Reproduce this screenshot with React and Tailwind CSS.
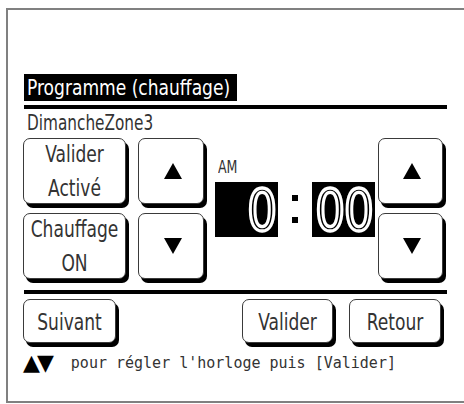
import React from "react";

const cond = "font-['DejaVu_Sans_Condensed','DejaVu_Sans',sans-serif] [font-stretch:condensed]";

function Btn({ className = "", children }) {
  return (
    <div
      className={`flex items-center justify-center bg-white border-[1.5px] border-[#3a3a3a] rounded-[7px] shadow-[3px_4px_0_0_#000] text-[#333] ${className}`}
    >
      {children}
    </div>
  );
}

function Label({ children }) {
  return (
    <span className={`inline-block scale-y-125 text-[19px] leading-[27px] text-center ${cond}`}>
      {children}
    </span>
  );
}

function Arrow({ up }) {
  return (
    <svg width="20" height="18" viewBox="0 0 20 18" className="ml-[3px]">
      {up ? (
        <polygon points="10,1 19,17 1,17" fill="#000" />
      ) : (
        <polygon points="1,1 19,1 10,17" fill="#000" />
      )}
    </svg>
  );
}

const digit = `inline-block scale-y-110 text-[52px] leading-none text-black [-webkit-text-stroke:3px_#fff] ${cond}`;

export default function App() {
  return (
    <div className="w-[464px] h-[404px] bg-white overflow-hidden">
      <div className="ml-[6px] mt-[8px] w-[470px] h-[395px] border-t-2 border-l-2 border-b-2 border-[#808080]">
        <div className="ml-[15px] mt-[64px] w-[424px] flex flex-col">
          {/* Title */}
          <div className="ml-[1px] w-[213px] h-[27px] bg-black text-white pl-[3px] flex items-center">
            <span className={`inline-block scale-y-110 text-[19px] leading-none ${cond}`}>
              Programme (chauffage)
            </span>
          </div>
          <div className="ml-[1px] mt-[4px] h-[4px] bg-black" />

          <div className="h-[29px] flex items-center pl-[4px]">
            <span className={`inline-block scale-y-125 text-[17px] leading-none text-[#333] ${cond}`}>
              DimancheZone3
            </span>
          </div>

          {/* Main controls */}
          <div className="flex">
            <div className="flex flex-col gap-[9px]">
              <Btn className="w-[103px] h-[66px]">
                <Label>
                  Valider
                  <br />
                  Activé
                </Label>
              </Btn>
              <Btn className="w-[103px] h-[66px]">
                <Label>
                  Chauffage
                  <br />
                  ON
                </Label>
              </Btn>
            </div>
            <div className="ml-[12px] flex flex-col gap-[9px]">
              <Btn className="w-[66px] h-[66px]">
                <Arrow up />
              </Btn>
              <Btn className="w-[66px] h-[66px]">
                <Arrow />
              </Btn>
            </div>

            <div className="w-[174px] flex flex-col pl-[11px]">
              <div className="h-[44px] pl-[3px] pt-[20px]">
                <span className={`block w-fit origin-top scale-y-125 text-[14px] leading-[14px] text-[#333] ${cond}`}>
                  AM
                </span>
              </div>
              <div className="flex items-center">
                <div className="w-[63px] h-[55px] bg-black flex items-center justify-end pt-[3px] pr-[1px]">
                  <span className={digit}>0</span>
                </div>
                <div className="w-[34px] h-[55px] flex flex-col items-center pt-[13px] gap-[16px]">
                  <div className="w-[6px] h-[6px] bg-black" />
                  <div className="w-[6px] h-[6px] bg-black" />
                </div>
                <div className="w-[63px] h-[55px] bg-black flex items-center justify-center pt-[3px] pl-[1px]">
                  <span className={`${digit} tracking-[-1px]`}>00</span>
                </div>
              </div>
            </div>

            <div className="flex flex-col gap-[9px]">
              <Btn className="w-[65px] h-[66px]">
                <Arrow up />
              </Btn>
              <Btn className="w-[65px] h-[66px]">
                <Arrow />
              </Btn>
            </div>
          </div>

          <div className="ml-[1px] mt-[11px] h-[4px] bg-black" />

          {/* Bottom buttons */}
          <div className="mt-[5px] flex">
            <Btn className="w-[93px] h-[44px]">
              <Label>Suivant</Label>
            </Btn>
            <Btn className="ml-auto w-[91px] h-[44px]">
              <Label>Valider</Label>
            </Btn>
            <Btn className="ml-[16px] mr-[6px] w-[92px] h-[44px]">
              <Label>Retour</Label>
            </Btn>
          </div>

          <div className="mt-[6px] h-[28px] flex items-center">
            <span className="font-['DejaVu_Sans',sans-serif] text-[22px] leading-none tracking-[-3px]">▲▼</span>
            <span className="ml-[20px] font-['DejaVu_Sans_Mono',monospace] text-[15px] leading-none text-[#333]">
              pour régler l'horloge puis [Valider]
            </span>
          </div>
        </div>
      </div>
    </div>
  );
}
